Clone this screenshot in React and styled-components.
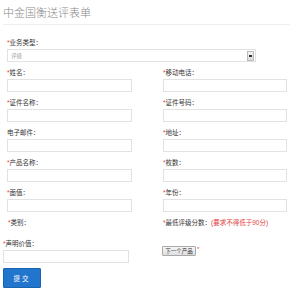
import React from 'react'
import styled, { createGlobalStyle } from 'styled-components';

/**** Styles ****/
const GlobalStyle = createGlobalStyle`
  body {
    margin: 0;
    background: #fff;
    font-family: "Liberation Sans", "Noto Sans CJK SC", sans-serif;
  }
`

const Page = styled.div`
  width: 300px;
  height: 300px;
  padding: 0 3px;
  box-sizing: border-box;
  overflow: hidden;
`

const Title = styled.h1`
  margin: 0;
  width: 287px;
  padding: 6px 0 4px;
  font-family: "Liberation Serif", "Noto Sans CJK SC", serif;
  font-weight: 300;
  font-size: 11px;
  line-height: 14px;
  color: #888;
  border-bottom: 1px solid #eee;
`

const Form = styled.form`
  padding-top: 14px;
`

const Indent = styled.div`
  padding-left: 4px;
`

const Grid = styled.div`
  display: grid;
  grid-template-columns: 125px 124px;
  column-gap: 31px;
  row-gap: 7px;
  margin-top: 7px;
`

const Field = styled.div`
  display: flex;
  flex-direction: column;
  gap: 2px;
`

const Label = styled.label`
  display: block;
  height: 8px;
  font-size: 6.5px;
  line-height: 8px;
  color: #333;
  white-space: nowrap;
  padding-left: ${p => p.$shift ? '1px' : '0'};
`

const Star = styled.span`
  color: #e23b3b;
`

const Hint = styled.span`
  color: #e23b3b;
`

const Input = styled.input`
  display: block;
  box-sizing: border-box;
  width: 100%;
  height: 13px;
  margin: 0;
  padding: 0 3px;
  border: 1px solid #e2e2e2;
  background: #fff;
  outline: none;
`

const SelectBox = styled.div`
  display: flex;
  align-items: center;
  justify-content: space-between;
  box-sizing: border-box;
  width: 249px;
  height: 13px;
  padding: 0 1px 0 3px;
  border: 1px solid #e2e2e2;
  font-size: 5.5px;
  color: #aaa;
`

const Arrow = styled.div`
  display: flex;
  align-items: center;
  justify-content: center;
  box-sizing: border-box;
  width: 7px;
  height: 10px;
  border: 1px solid #bbb;
  background: linear-gradient(#f4f4f4, #dcdcdc);
  &::after {
    content: '';
    width: 3px;
    height: 2px;
    background: #333;
  }
`

const LastRow = styled.div`
  display: grid;
  grid-template-columns: 126px 1fr;
  column-gap: 33px;
  margin-top: 13px;
`

const NextWrap = styled.div`
  display: flex;
  align-items: flex-start;
  gap: 1px;
  padding-top: 6px;
  font-size: 6px;
  line-height: 6px;
`

const NextButton = styled.button`
  box-sizing: border-box;
  width: 34px;
  height: 10px;
  padding: 0;
  border: 1px solid #aaa;
  border-radius: 1px;
  background: linear-gradient(#f6f6f6, #dedede);
  font-family: "Liberation Sans", "Noto Sans CJK SC", sans-serif;
  font-size: 5.5px;
  color: #333;
`

const Submit = styled.button`
  display: block;
  box-sizing: border-box;
  width: 38px;
  height: 20px;
  margin-top: 5px;
  padding: 0;
  border: 1px solid #1a63b0;
  border-radius: 1px;
  background: #2175cc;
  color: #fff;
  font-family: "Liberation Sans", "Noto Sans CJK SC", sans-serif;
  font-size: 6.5px;
  letter-spacing: 2px;
`

/**** Data ****/
const rows = [
  ['姓名', true, '移动电话', true],
  ['证件名称', true, '证件号码', true],
  ['电子邮件', false, '地址', true],
  ['产品名称', true, '枚数', true],
  ['面值', true, '年份', true],
]

/**** Component ****/
const App = () => {
  return (<Page>
    <GlobalStyle />
    <Title>中金国衡送评表单</Title>
    <Form>
      <Indent>
        <Field>
          <Label><Star>*</Star>业务类型：</Label>
          <SelectBox>
            <span>评级</span>
            <Arrow />
          </SelectBox>
        </Field>
        <Grid>
          {rows.map(([a, sa, b, sb]) => (
            <React.Fragment key={a}>
              <Field>
                <Label>{sa && <Star>*</Star>}{a}：</Label>
                <Input type='text' />
              </Field>
              <Field>
                <Label>{sb && <Star>*</Star>}{b}：</Label>
                <Input type='text' />
              </Field>
            </React.Fragment>
          ))}
          <Field>
            <Label $shift><Star>*</Star>类别：</Label>
          </Field>
          <Field>
            <Label><Star>*</Star>最低评级分数：<Hint>(要求不得低于90分)</Hint></Label>
          </Field>
        </Grid>
      </Indent>
      <LastRow>
        <Field>
          <Label><Star>*</Star>声明价值：</Label>
          <Input type='text' />
        </Field>
        <NextWrap>
          <NextButton type='button'>下一个产品</NextButton>
          <Star>*</Star>
        </NextWrap>
      </LastRow>
      <Submit type='button'>提交</Submit>
    </Form>
  </Page>)
}

export default App;
